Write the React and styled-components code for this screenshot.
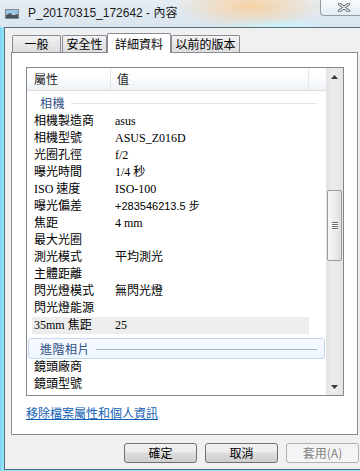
import React from "react";
import styled, { createGlobalStyle } from "styled-components";

const CJK = `"Noto Sans CJK TC", "Noto Sans CJK JP", sans-serif`;
const SERIF = `"Liberation Serif", "Noto Sans CJK TC", serif`;
const SANS = `"Liberation Sans", "Noto Sans CJK TC", sans-serif`;

const GlobalStyle = createGlobalStyle`
  html, body { margin: 0; padding: 0; }
  body { font-family: ${CJK}; font-size: 12px; color: #000; }
  * { box-sizing: border-box; }
`;

const cameraRows = [
  { label: "相機製造商", value: "asus" },
  { label: "相機型號", value: "ASUS_Z016D" },
  { label: "光圈孔徑", value: "f/2" },
  { label: "曝光時間", value: "1/4 秒" },
  { label: "ISO 速度", value: "ISO-100" },
  { label: "曝光偏差", value: "+283546213.5 步", sans: true },
  { label: "焦距", value: "4 mm" },
  { label: "最大光圈", value: "" },
  { label: "測光模式", value: "平均測光" },
  { label: "主體距離", value: "" },
  { label: "閃光燈模式", value: "無閃光燈" },
  { label: "閃光燈能源", value: "" },
  { label: "35mm 焦距", value: "25", hl: true },
];

const advancedRows = [
  { label: "鏡頭廠商", value: "" },
  { label: "鏡頭型號", value: "" },
];

const tabs = [
  { name: "一般", w: 49, ml: 0 },
  { name: "安全性", w: 45, ml: 1 },
  { name: "詳細資料", w: 64, ml: 0, active: true },
  { name: "以前的版本", w: 69, ml: 0 },
];

const Window = styled.div`
  width: 360px;
  height: 471px;
  display: flex;
  flex-direction: column;
  overflow: hidden;
  background: linear-gradient(90deg, #6cc9e6 0, #8fdff6 1px, #8fdff6 100%);
`;

const TitleBar = styled.div`
  height: 27px;
  flex: none;
  display: flex;
  align-items: flex-start;
  background:
    radial-gradient(ellipse 75px 22px at 250px 6px, rgba(250, 205, 150, 0.85), rgba(250, 205, 150, 0) 100%),
    radial-gradient(ellipse 55px 8px at 275px 25px, rgba(200, 245, 255, 0.95), rgba(200, 245, 255, 0) 100%),
    linear-gradient(#e6edf3, #d9e5ef);
`;

const TitleIcon = styled.svg`
  flex: none;
  margin: 9px 0 0 5px;
`;

const TitleText = styled.span`
  margin: 5px 0 0 9px;
  font-family: ${SANS};
  font-size: 12px;
  line-height: 16px;
  color: #1a1a1a;
  white-space: nowrap;
`;

const CloseButton = styled.div`
  margin-left: auto;
  margin-right: -8px;
  width: 48px;
  height: 16px;
  border: 1px solid #8e9aa6;
  border-top: none;
  border-radius: 0 0 4px 4px;
  background: linear-gradient(rgba(255, 255, 255, 0.75), rgba(232, 238, 244, 0.7));
  display: flex;
  align-items: center;
  justify-content: center;
`;

const Client = styled.div`
  flex: 1;
  margin: 0 -10px 1px 4px;
  border: 1px solid #56707e;
  background: #f0f0f0;
  display: flex;
  flex-direction: column;
`;

const TabStrip = styled.div`
  height: 25px;
  margin-bottom: -1px;
  padding-left: 7px;
  display: flex;
  align-items: flex-end;
  position: relative;
  z-index: 1;
`;

const Tab = styled.div`
  width: ${(p) => p.$w}px;
  height: ${(p) => (p.$active ? 20 : 17)}px;
  margin-left: ${(p) => p.$ml}px;
  margin-bottom: ${(p) => (p.$active ? 0 : 1)}px;
  border: 1px solid #898c95;
  border-bottom: none;
  border-radius: 2px 2px 0 0;
  background: ${(p) => (p.$active ? "#ffffff" : "linear-gradient(#f4f4f4, #e6e6e6 50%, #dedede)")};
  display: flex;
  align-items: center;
  justify-content: center;
  font-size: 12px;
  line-height: 16px;
  color: #000;
  white-space: nowrap;
`;

const Panel = styled.div`
  flex: none;
  margin-left: 6px;
  width: 347px;
  height: 383px;
  border: 1px solid #898c95;
  background: #fff;
  padding: 14px 0 0 14px;
`;

const ListBox = styled.div`
  width: 318px;
  height: 329px;
  border: 1px solid #828790;
  display: flex;
`;

const ListContent = styled.div`
  flex: 1;
  display: flex;
  flex-direction: column;
  overflow: hidden;
`;

const Header = styled.div`
  height: 23px;
  flex: none;
  display: flex;
  border-bottom: 1px solid #d8dde3;
  background: linear-gradient(#ffffff 0, #fdfdfe 40%, #eef2f6 100%);
`;

const HeaderCell = styled.div`
  width: ${(p) => (p.$w ? `${p.$w}px` : "auto")};
  flex: ${(p) => (p.$w ? "none" : 1)};
  padding-left: ${(p) => p.$pl || 0}px;
  border-right: ${(p) => (p.$w ? "1px solid #e3e7eb" : "none")};
  line-height: 22px;
  font-size: 12px;
  color: #1e1e1e;
`;

const Group = styled.div`
  flex: none;
  margin: ${(p) => p.$mt}px 0 0 1px;
  width: 297px;
  height: 21px;
  padding-left: 11px;
  display: flex;
  align-items: center;
  border: 1px solid ${(p) => (p.$focus ? "#c3d8ee" : "transparent")};
  border-radius: 3px;
  background: ${(p) => (p.$focus ? "linear-gradient(#f6fafe, #edf5fd)" : "transparent")};
`;

const GroupTitle = styled.span`
  font-size: 12px;
  line-height: 16px;
  color: #2f4f86;
  letter-spacing: 0.5px;
`;

const GroupLine = styled.div`
  flex: 1;
  height: 1px;
  margin: 1px 7px 0 6px;
  background: ${(p) => (p.$focus ? "#a7b6c6" : "#dde3e9")};
`;

const Row = styled.div`
  flex: none;
  margin-left: 5px;
  width: 277px;
  height: 17px;
  display: grid;
  grid-template-columns: 83px 1fr;
  align-items: center;
  background: ${(p) => (p.$hl ? "#ededed" : "transparent")};
`;

const Label = styled.span`
  padding-left: 2px;
  font-family: ${SERIF};
  font-size: 12px;
  line-height: 17px;
  white-space: nowrap;
`;

const Value = styled.span`
  font-family: ${(p) => (p.$sans ? SANS : SERIF)};
  font-size: ${(p) => (p.$sans ? 11 : 12)}px;
  line-height: 17px;
  white-space: nowrap;
`;

const ScrollBar = styled.div`
  width: 17px;
  flex: none;
  display: flex;
  flex-direction: column;
  align-items: center;
  background: linear-gradient(90deg, #e3e3e3, #ececec 40%, #e6e6e6);
`;

const ArrowBox = styled.div`
  height: 17px;
  width: 100%;
  flex: none;
  display: flex;
  align-items: center;
  justify-content: center;
  margin-top: ${(p) => (p.$down ? "auto" : "0")};
`;

const Thumb = styled.div`
  margin-top: 105px;
  width: 15px;
  height: 71px;
  border: 1px solid #9b9b9b;
  border-radius: 2px;
  background: linear-gradient(90deg, #f6f6f6, #ececec 50%, #dedede);
  display: flex;
  flex-direction: column;
  align-items: center;
  justify-content: center;
  gap: 1px;
`;

const Grip = styled.div`
  width: 6px;
  height: 1px;
  background: #6e6e6e;
  box-shadow: 0 1px 0 #fafafa;
`;

const RemoveLink = styled.a`
  display: inline-block;
  margin-top: 9px;
  font-size: 12px;
  line-height: 16px;
  color: #1260b4;
  text-decoration: underline;
`;

const ButtonRow = styled.div`
  margin-top: 8px;
  padding-left: 119px;
  display: flex;
  gap: 8px;
`;

const Button = styled.div`
  width: 73px;
  height: 20px;
  flex: none;
  border: 1px solid ${(p) => (p.$disabled ? "#adb2b5" : "#707070")};
  border-radius: 3px;
  background: ${(p) =>
    p.$disabled ? "#f4f4f4" : "linear-gradient(#f2f2f2 0, #ebebeb 45%, #dddddd 50%, #cfcfcf 100%)"};
  color: ${(p) => (p.$disabled ? "#838383" : "#000")};
  display: flex;
  align-items: center;
  justify-content: center;
  font-size: 12px;
  line-height: 16px;
`;

const Arrow = ({ down }) => (
  <svg width="7" height="4" viewBox="0 0 7 4">
    <path d={down ? "M0 0H7L3.5 4Z" : "M0 4H7L3.5 0Z"} fill="#3c3c3c" />
  </svg>
);

export default function App() {
  return (
    <>
      <GlobalStyle />
      <Window>
        <TitleBar>
          <TitleIcon width="14" height="10" viewBox="0 0 14 10">
            <rect x="0.5" y="0.5" width="13" height="9" fill="#dfeaf3" stroke="#7d8a96" />
            <rect x="1" y="1" width="12" height="4" fill="#9cc8e8" />
            <path d="M1 9V6L5 4L8 6L13 5V9Z" fill="#4a5560" />
          </TitleIcon>
          <TitleText>P_20170315_172642 - 內容</TitleText>
          <CloseButton>
            <svg width="12" height="9" viewBox="0 0 12 9">
              <path d="M1.5 1L10.5 8M10.5 1L1.5 8" stroke="#5c6670" strokeWidth="3" strokeLinecap="round" />
              <path d="M1.5 1L10.5 8M10.5 1L1.5 8" stroke="#f4f6f8" strokeWidth="1.2" strokeLinecap="round" />
            </svg>
          </CloseButton>
        </TitleBar>
        <Client>
          <TabStrip>
            {tabs.map((t) => (
              <Tab key={t.name} $w={t.w} $ml={t.ml} $active={t.active}>
                {t.name}
              </Tab>
            ))}
          </TabStrip>
          <Panel>
            <ListBox>
              <ListContent>
                <Header>
                  <HeaderCell $w={84} $pl={7}>屬性</HeaderCell>
                  <HeaderCell $w={198} $pl={6}>值</HeaderCell>
                  <HeaderCell />
                </Header>
                <Group $mt={1}>
                  <GroupTitle>相機</GroupTitle>
                  <GroupLine />
                </Group>
                {cameraRows.map((r) => (
                  <Row key={r.label} $hl={r.hl}>
                    <Label>{r.label}</Label>
                    <Value $sans={r.sans}>{r.value}</Value>
                  </Row>
                ))}
                <Group $mt={4} $focus>
                  <GroupTitle>進階相片</GroupTitle>
                  <GroupLine $focus />
                </Group>
                {advancedRows.map((r) => (
                  <Row key={r.label}>
                    <Label>{r.label}</Label>
                    <Value>{r.value}</Value>
                  </Row>
                ))}
              </ListContent>
              <ScrollBar>
                <ArrowBox>
                  <Arrow />
                </ArrowBox>
                <Thumb>
                  <Grip />
                  <Grip />
                  <Grip />
                  <Grip />
                </Thumb>
                <ArrowBox $down>
                  <Arrow down />
                </ArrowBox>
              </ScrollBar>
            </ListBox>
            <RemoveLink>移除檔案屬性和個人資訊</RemoveLink>
          </Panel>
          <ButtonRow>
            <Button>確定</Button>
            <Button>取消</Button>
            <Button $disabled>套用(A)</Button>
          </ButtonRow>
        </Client>
      </Window>
    </>
  );
}
